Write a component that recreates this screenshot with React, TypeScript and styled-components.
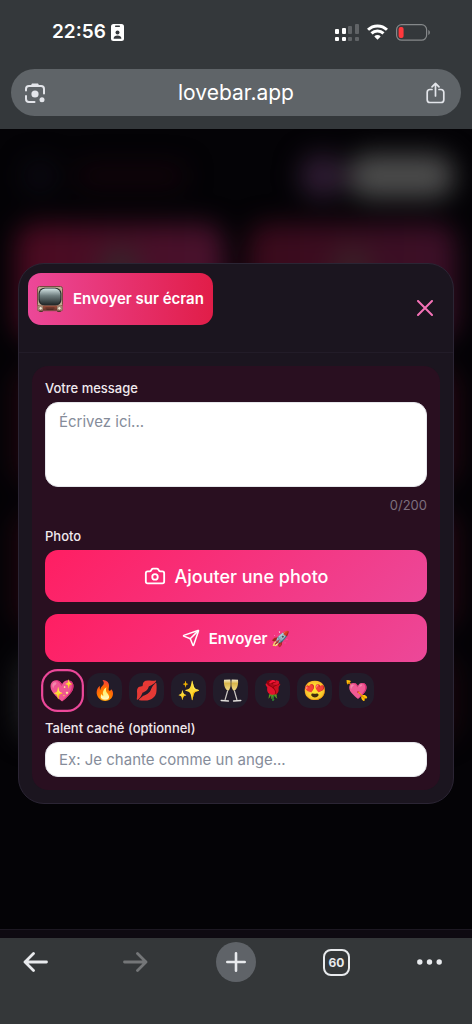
import React, { useState } from 'react';
import styled, { createGlobalStyle } from 'styled-components';
import { Camera, Send } from 'lucide-react';

const GlobalStyle = createGlobalStyle`
  * { box-sizing: border-box; }
  body { margin: 0; background: #343739; font-family: Inter, sans-serif; }
  button, input, textarea { font-family: inherit; }
  button { border: 0; padding: 0; background: none; color: inherit; cursor: pointer; }
  svg { display: block; flex: none; }
`;

const Screen = styled.div`
  display: flex;
  flex-direction: column;
  min-height: 100vh;
`;

const BrowserTop = styled.header`
  background: #34383b;
  padding: 20px 11px 13px;
  color: #fff;
`;

const StatusBar = styled.div`
  display: flex;
  align-items: center;
  justify-content: space-between;
  height: 24px;
  margin-bottom: 25px;
  padding: 0 30px 0 41px;
`;

const Clock = styled.div`
  display: flex;
  align-items: center;
  gap: 5px;
  font-size: 19px;
  font-weight: 600;
  line-height: 24px;
`;

const StatusIcons = styled.div`
  display: flex;
  align-items: center;
  gap: 8px;
`;

const AddressBar = styled.div`
  display: flex;
  align-items: center;
  justify-content: space-between;
  height: 47px;
  padding: 0 16px 0 13px;
  border-radius: 24px;
  background: #5f6468;
  color: #e3e5ea;
`;

const BarButton = styled.button`
  display: flex;
`;

const Url = styled.span`
  color: #fff;
  font-size: 21px;
  line-height: 28px;
`;

const Viewport = styled.main`
  flex: 1;
  display: grid;
  grid-template-columns: minmax(0, 1fr);
  background: #040306;
  overflow: hidden;
  > * { grid-area: 1 / 1; }
`;

const Scene = styled.div`
  display: flex;
  flex-direction: column;
  filter: blur(13px);
`;

const SceneHeader = styled.div`
  display: flex;
  align-items: center;
  gap: 20px;
  padding: 25px 18px 22px 24px;
`;

const SceneShape = styled.div<{ $w: number; $h: number; $fill: string }>`
  width: ${p => p.$w}px;
  height: ${p => p.$h}px;
  border-radius: 20px;
  background: ${p => p.$fill};
`;

const SceneActions = styled.div`
  display: flex;
  gap: 4px;
  margin-left: auto;
`;

const SceneGrid = styled.div`
  display: grid;
  grid-template-columns: 1fr 1fr;
  gap: 28px 24px;
  padding: 4px 16px;
`;

const SceneCard = styled.div<{ $from: string; $to: string; $h: number; $spot?: string }>`
  height: ${p => p.$h}px;
  border-radius: 20px;
  background: ${p => (p.$spot ? `radial-gradient(circle at 50% 42px, ${p.$spot} 12px, transparent 26px), ` : '')}
    linear-gradient(90deg, ${p => p.$from}, ${p => p.$to});
`;

const Overlay = styled.div`
  display: flex;
  align-items: center;
  padding: 0 18px;
  z-index: 1;
`;

const PageFooter = styled.div`
  align-self: end;
  height: 9px;
  border-top: 1px solid #1d1822;
  background: #0e0a11;
`;

const Modal = styled.section`
  flex: 1;
  border: 1px solid #2b2534;
  border-radius: 26px;
  background: #1b151f;
`;

const ModalHeader = styled.div`
  display: flex;
  align-items: center;
  justify-content: space-between;
  height: 89px;
  padding: 9px 20px 9px 9px;
  border-bottom: 1px solid #221c28;
`;

const Title = styled.h1`
  align-self: flex-start;
  display: flex;
  align-items: center;
  gap: 10px;
  height: 52px;
  margin: 0;
  padding: 0 9px;
  border-radius: 13px;
  background: linear-gradient(90deg, #ec4899, #e11d48);
  color: #fff;
  font-size: 15px;
  font-weight: 600;
  line-height: 20px;
`;

const CloseButton = styled.button`
  display: flex;
  color: #f472b6;
`;

const ModalBody = styled.div`
  padding: 13px;
`;

const Form = styled.form`
  display: flex;
  flex-direction: column;
  padding: 13px;
  border-radius: 16px;
  background: #290f20;
`;

const Label = styled.label`
  margin-bottom: 5px;
  color: #f0e9ee;
  font-size: 13px;
  font-weight: 500;
  line-height: 18px;
`;

const fieldStyles = `
  width: 100%;
  border: 1px solid #e5e7eb;
  border-radius: 13px;
  background: #fff;
  color: #111827;
  font-size: 15px;
  line-height: 20px;
  &::placeholder { color: #858c9a; opacity: 1; }
`;

const MessageBox = styled.textarea`
  ${fieldStyles}
  display: block;
  height: 85px;
  padding: 9px 13px;
  resize: none;
`;

const TextInput = styled.input`
  ${fieldStyles}
  height: 35px;
  padding: 0 13px;
`;

const Counter = styled.div`
  margin: 9px 0 13px;
  color: #7d6f7e;
  font-size: 13px;
  line-height: 18px;
  text-align: right;
`;

const ActionButton = styled.button<{ $large?: boolean }>`
  display: flex;
  align-items: center;
  justify-content: center;
  gap: 9px;
  height: ${p => (p.$large ? 52 : 48)}px;
  margin-bottom: ${p => (p.$large ? 12 : 11)}px;
  border-radius: 13px;
  background: linear-gradient(135deg, #ff1e62, #ec4899);
  color: #fff;
  font-size: ${p => (p.$large ? 18 : 15)}px;
  font-weight: ${p => (p.$large ? 500 : 600)};
`;

const EmojiRow = styled.div`
  display: flex;
  gap: 7px;
  margin-bottom: 11px;
`;

const EmojiButton = styled.button<{ $active: boolean }>`
  display: flex;
  align-items: center;
  justify-content: center;
  width: 35px;
  height: 35px;
  border-radius: 13px;
  background: ${p => (p.$active ? 'transparent' : '#221c2a')};
  box-shadow: ${p => (p.$active ? '0 0 0 2px #ec4899' : 'none')};
  transform: ${p => (p.$active ? 'scale(1.1)' : 'none')};
  font-size: 19px;
`;

const BrowserNav = styled.nav`
  display: flex;
  justify-content: space-between;
  padding: 4px 15px 42px;
  background: #343739;
  color: #e8eaed;
`;

const NavButton = styled.button<{ $filled?: boolean; $start?: boolean }>`
  display: flex;
  align-items: center;
  justify-content: ${p => (p.$start ? 'flex-start' : 'center')};
  width: 40px;
  height: 40px;
  border-radius: 50%;
  background: ${p => (p.$filled ? '#5f6368' : 'none')};
  &:disabled { color: #747678; }
`;

const TabCount = styled.span`
  display: flex;
  align-items: center;
  justify-content: center;
  width: 27px;
  height: 27px;
  border: 2px solid currentColor;
  border-radius: 8px;
  font-size: 12px;
  font-weight: 700;
`;

const BadgeIcon = () => (
  <svg width="13" height="17" viewBox="0 0 13 17" aria-hidden="true">
    <rect width="13" height="17" rx="2.5" fill="#fff" />
    <rect x="4" y="1.6" width="5" height="1.3" rx=".6" fill="#34383b" />
    <circle cx="6.5" cy="8.6" r="2" fill="#34383b" />
    <path d="M2.6 14.8c0-2.400 1.700-3.400 3.900-3.400s3.900 1 3.900 3.400z" fill="#34383b" />
  </svg>
);

const SignalIcon = () => (
  <svg width="24" height="17" viewBox="0 0 24 17" fill="#fff" aria-hidden="true">
    <rect y="5" width="4" height="5" rx="1" />
    <rect x="7" y="4" width="4" height="6" rx="1" />
    <rect x="13" y="2" width="4" height="8" rx="1" opacity=".22" />
    <rect x="20" width="4" height="10" rx="1" opacity=".22" />
    <rect y="13" width="4" height="4" rx="1" />
    <rect x="7" y="13" width="4" height="4" rx="1" />
    <rect x="13" y="13" width="4" height="4" rx="1" opacity=".22" />
    <rect x="20" y="13" width="4" height="4" rx="1" opacity=".22" />
  </svg>
);

const WifiIcon = () => (
  <svg width="21" height="16" viewBox="0 0 21 16" fill="none" stroke="#fff" strokeWidth="3" aria-hidden="true">
    <path d="M1 5.800a13.600 13.600 0 0 1 19 0" />
    <path d="M4.500 9.400a8.600 8.600 0 0 1 12 0" />
    <path d="M10.500 15.700 7.300 12.400a4.600 4.600 0 0 1 6.400 0z" fill="#fff" stroke="none" />
  </svg>
);

const BatteryIcon = () => (
  <svg width="35" height="17" viewBox="0 0 35 17" aria-hidden="true">
    <rect x=".6" y=".6" width="30" height="15.600" rx="5" fill="none" stroke="#85888a" strokeWidth="1.200" />
    <rect x="2.600" y="3" width="5" height="11" rx="2" fill="#ff383c" />
    <path d="M32.300 6v5c1-.4 1.600-1.400 1.600-2.500S33.300 6.400 32.300 6z" fill="#85888a" />
  </svg>
);

const LensIcon = () => (
  <svg width="22" height="22" viewBox="0 0 22 22" fill="none" stroke="currentColor" strokeWidth="2" strokeLinecap="round" aria-hidden="true">
    <path d="M2 8.500V7a3 3 0 0 1 3-3h12a3 3 0 0 1 3 3v4.500" />
    <path d="M2 14v3a3 3 0 0 0 3 3h5.500" />
    <path d="M6.500 4 8 1.500h6L15.500 4z" fill="currentColor" stroke="none" />
    <circle cx="11" cy="12" r="3.600" fill="currentColor" stroke="none" />
    <circle cx="18" cy="17.800" r="2.500" fill="currentColor" stroke="none" />
  </svg>
);

const ShareIcon = () => (
  <svg width="19" height="22" viewBox="0 0 19 22" fill="none" stroke="currentColor" strokeWidth="1.700" strokeLinecap="round" strokeLinejoin="round" aria-hidden="true">
    <path d="M6 7.500H4a2.800 2.800 0 0 0-2.800 2.800v7.400A2.800 2.800 0 0 0 4 20.500h11a2.800 2.800 0 0 0 2.800-2.800v-7.400A2.800 2.800 0 0 0 15 7.500h-2" />
    <path d="M9.500 14V1.500M6 4.800l3.500-3.500L13 4.800" />
  </svg>
);

const CloseIcon = () => (
  <svg width="16" height="16" viewBox="0 0 16 16" fill="none" stroke="currentColor" strokeWidth="2" strokeLinecap="round" aria-hidden="true">
    <path d="m1 1 14 14M15 1 1 15" />
  </svg>
);

const TvIcon = () => (
  <svg width="26" height="26" viewBox="0 0 26 26" aria-hidden="true">
    <defs>
      <linearGradient id="tvGlass" x1="0" y1="0" x2="0" y2="1">
        <stop offset="0" stopColor="#d3e4e4" />
        <stop offset=".45" stopColor="#6d7c7d" />
        <stop offset="1" stopColor="#23292a" />
      </linearGradient>
      <linearGradient id="tvBase" x1="0" y1="0" x2="0" y2="1">
        <stop offset="0" stopColor="#a4503c" />
        <stop offset="1" stopColor="#5c3128" />
      </linearGradient>
    </defs>
    <rect x="2" y="24" width="4" height="2" rx="1" fill="#4a2c26" />
    <rect x="20" y="24" width="4" height="2" rx="1" fill="#4a2c26" />
    <rect x=".5" y=".5" width="25" height="20" rx="2" fill="#bdaa93" stroke="#754b3f" />
    <rect x="1.500" y="1.800" width="23" height="18" rx="6" fill="#262b2c" />
    <rect x="2.600" y="2.600" width="20.800" height="16" rx="5.500" fill="url(#tvGlass)" />
    <rect x=".5" y="19.800" width="25" height="5" rx="1.200" fill="url(#tvBase)" stroke="#7f5a4b" strokeWidth=".6" />
    <rect x=".6" y="20" width="5.400" height="4.500" rx="1" fill="#a89078" />
    <rect x="20" y="20" width="5.400" height="4.500" rx="1" fill="#a89078" />
    <circle cx="3.600" cy="22.300" r="1.700" fill="#f3ead6" stroke="#5f4438" strokeWidth=".5" />
    <circle cx="22.400" cy="22.300" r="1.700" fill="#f3ead6" stroke="#5f4438" strokeWidth=".5" />
    <path d="M8.500 22h9M9.500 23.400h7" stroke="#3f241f" strokeWidth=".7" />
  </svg>
);

const GlassesIcon = () => (
  <svg width="22" height="23" viewBox="0 0 22 23" aria-hidden="true">
    <defs>
      <linearGradient id="wine" x1="0" y1="0" x2="0" y2="1">
        <stop offset="0" stopColor="#f4eccb" />
        <stop offset=".35" stopColor="#d9b64c" />
        <stop offset="1" stopColor="#f2dc8c" />
      </linearGradient>
    </defs>
    <path d="M4 .8 10.300.5c.9 4.500.4 9.500-2.100 11.200C5.200 11 3.400 6 4 .8z" fill="url(#wine)" />
    <path d="M18 .8 11.700.5c-.9 4.500-.4 9.500 2.100 11.200C16.800 11 18.600 6 18 .8z" fill="url(#wine)" />
    <path d="M7.700 11.500 5 21M14.300 11.500 17 21" stroke="#cdc9c4" strokeWidth="1.200" />
    <path d="m1.200 21.400 7.200.6M20.800 21.400l-7.200.6" stroke="#e2dfdc" strokeWidth="1.500" strokeLinecap="round" />
  </svg>
);

const BackIcon = () => (
  <svg width="25" height="20" viewBox="0 0 25 20" fill="none" stroke="currentColor" strokeWidth="2.800" strokeLinecap="round" strokeLinejoin="round" aria-hidden="true">
    <path d="M23.500 10H2M10.500 1.500 2 10l8.500 8.500" />
  </svg>
);

const ForwardIcon = () => (
  <svg width="25" height="20" viewBox="0 0 25 20" fill="none" stroke="currentColor" strokeWidth="2.800" strokeLinecap="round" strokeLinejoin="round" aria-hidden="true">
    <path d="M1.500 10H23M14.500 1.500 23 10l-8.500 8.500" />
  </svg>
);

const PlusIcon = () => (
  <svg width="20" height="20" viewBox="0 0 20 20" stroke="currentColor" strokeWidth="2.600" strokeLinecap="round" aria-hidden="true">
    <path d="M10 1.300v17.400M1.300 10h17.400" />
  </svg>
);

const DotsIcon = () => (
  <svg width="25" height="6" viewBox="0 0 25 6" fill="currentColor" aria-hidden="true">
    <circle cx="2.800" cy="3" r="2.700" />
    <circle cx="12.500" cy="3" r="2.700" />
    <circle cx="22.200" cy="3" r="2.700" />
  </svg>
);

const EMOJIS = ['💖', '🔥', '💋', '✨', '🥂', '🌹', '😍', '💘'];

export default function App() {
  const [message, setMessage] = useState('');
  const [emoji, setEmoji] = useState(EMOJIS[0]);
  return (
    <Screen>
      <GlobalStyle />
      <BrowserTop>
        <StatusBar>
          <Clock>22:56 <BadgeIcon /></Clock>
          <StatusIcons>
            <SignalIcon />
            <WifiIcon />
            <BatteryIcon />
          </StatusIcons>
        </StatusBar>
        <AddressBar>
          <BarButton aria-label="Recherche visuelle"><LensIcon /></BarButton>
          <Url>lovebar.app</Url>
          <BarButton aria-label="Partager"><ShareIcon /></BarButton>
        </AddressBar>
      </BrowserTop>
      <Viewport>
        <Scene aria-hidden="true">
          <SceneHeader>
            <SceneShape $w={32} $h={32} $fill="#0b0912" />
            <SceneShape $w={110} $h={22} $fill="#12030a" />
            <SceneActions>
              <SceneShape $w={44} $h={44} $fill="#2f1c33" />
              <SceneShape $w={106} $h={44} $fill="#4c4c4c" />
            </SceneActions>
          </SceneHeader>
          <SceneGrid>
            <SceneCard $h={116} $from="#4a0a20" $to="#48122d" $spot="#35242a" />
            <SceneCard $h={116} $from="#3a0a1b" $to="#3c1028" $spot="#3a2027" />
            <SceneCard $h={116} $from="#24050f" $to="#24050f" />
            <SceneCard $h={116} $from="#24050f" $to="#2a0714" />
            <SceneCard $h={116} $from="#24050f" $to="#24050f" />
            <SceneCard $h={116} $from="#24050f" $to="#2a0714" />
            <SceneCard $h={84} $from="#1e1e20" $to="#1e1e20" />
            <SceneCard $h={84} $from="#16040b" $to="#1c050d" />
          </SceneGrid>
        </Scene>
        <PageFooter />
        <Overlay>
          <Modal role="dialog" aria-labelledby="title">
            <ModalHeader>
              <Title id="title"><TvIcon />Envoyer sur écran</Title>
              <CloseButton aria-label="Fermer"><CloseIcon /></CloseButton>
            </ModalHeader>
            <ModalBody>
              <Form onSubmit={e => e.preventDefault()}>
                <Label htmlFor="message">Votre message</Label>
                <MessageBox
                  id="message"
                  maxLength={200}
                  placeholder="Écrivez ici..."
                  value={message}
                  onChange={e => setMessage(e.target.value)}
                />
                <Counter>{message.length}/200</Counter>
                <Label as="span">Photo</Label>
                <ActionButton type="button" $large>
                  <Camera size={22} aria-hidden="true" />
                  Ajouter une photo
                </ActionButton>
                <ActionButton type="submit">
                  <Send size={18} aria-hidden="true" />
                  Envoyer 🚀
                </ActionButton>
                <EmojiRow>
                  {EMOJIS.map(e => (
                    <EmojiButton
                      key={e}
                      type="button"
                      aria-label={e}
                      aria-pressed={e === emoji}
                      $active={e === emoji}
                      onClick={() => setEmoji(e)}
                    >
                      {e === '🥂' ? <GlassesIcon /> : e}
                    </EmojiButton>
                  ))}
                </EmojiRow>
                <Label htmlFor="talent">Talent caché (optionnel)</Label>
                <TextInput id="talent" placeholder="Ex: Je chante comme un ange..." />
              </Form>
            </ModalBody>
          </Modal>
        </Overlay>
      </Viewport>
      <BrowserNav>
        <NavButton aria-label="Retour"><BackIcon /></NavButton>
        <NavButton aria-label="Avancer" disabled><ForwardIcon /></NavButton>
        <NavButton $filled aria-label="Nouvel onglet"><PlusIcon /></NavButton>
        <NavButton aria-label="Onglets"><TabCount>60</TabCount></NavButton>
        <NavButton $start aria-label="Menu"><DotsIcon /></NavButton>
      </BrowserNav>
    </Screen>
  );
}
